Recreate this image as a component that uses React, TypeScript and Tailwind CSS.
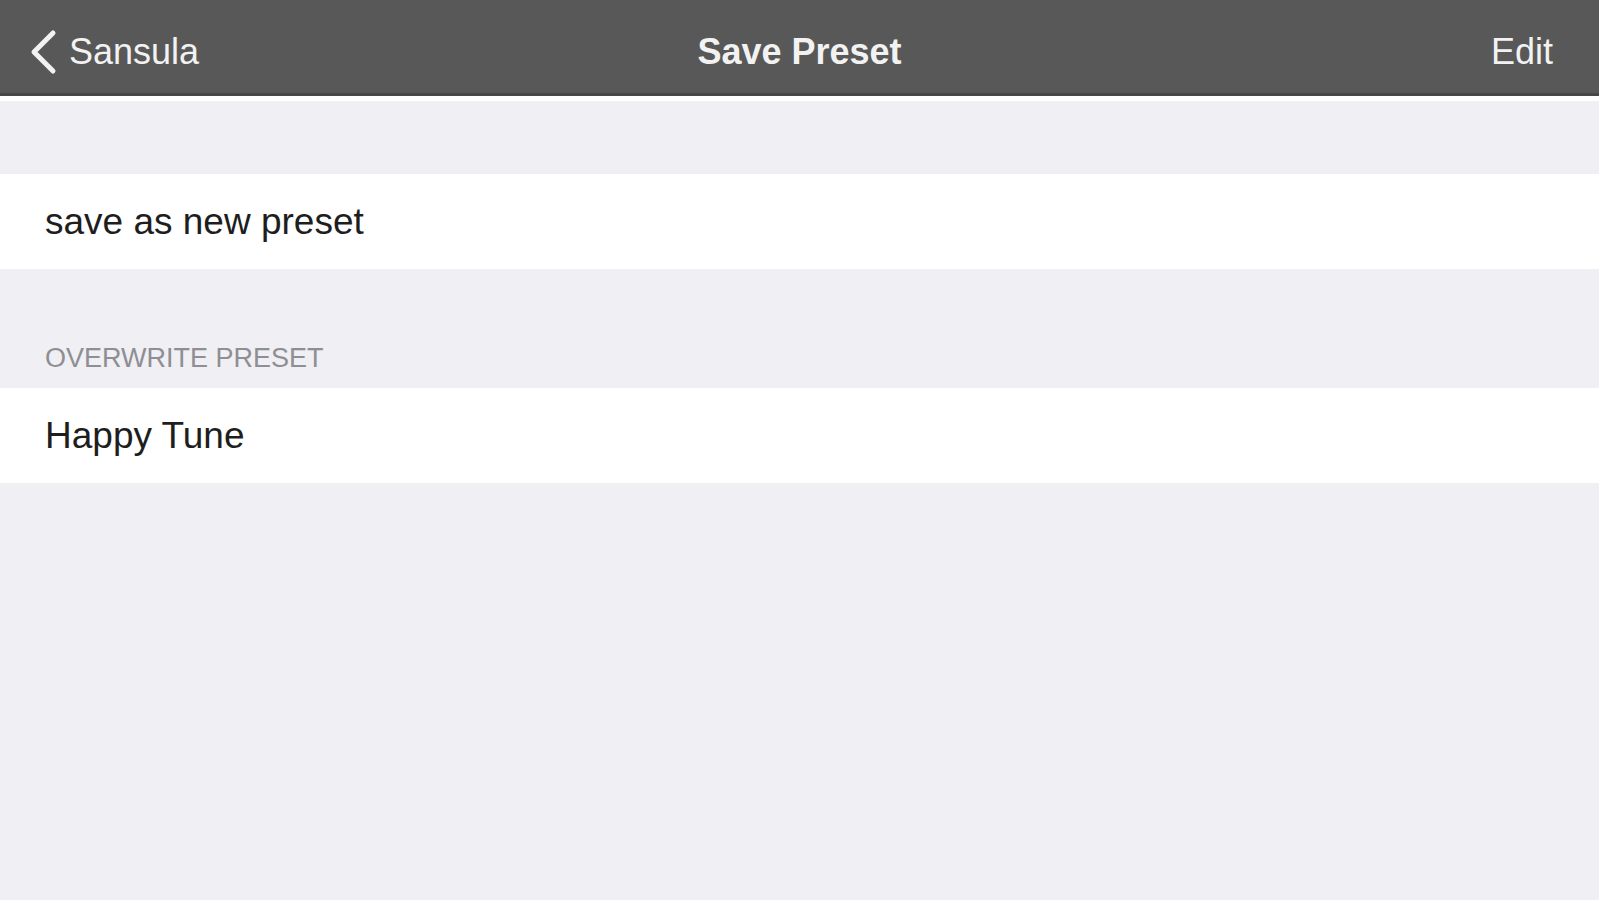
import React from 'react'

const font = { fontFamily: '"Liberation Sans", Arial, sans-serif' }

export default function App() {
  return (
    <div className="min-h-[900px] w-full bg-[#efeff4]" style={font}>
      {/* Nav bar */}
      <div className="relative flex h-[96px] items-center justify-between border-b-[3px] border-[#474747] bg-[#585858] px-[28px] pt-[10px] text-[36px] text-[#f2f2f2]">
        <button className="flex items-center gap-[11px]">
          <svg width="30" height="46" viewBox="0 0 30 46" fill="none">
            <path d="M25 4 L6 23 L25 42" stroke="#f2f2f2" strokeWidth="5" strokeLinecap="round" strokeLinejoin="round" />
          </svg>
          <span>Sansula</span>
        </button>
        <div className="absolute left-1/2 -translate-x-1/2 font-bold">Save Preset</div>
        <button className="pr-[18px]">Edit</button>
      </div>
      <div className="h-[5px] bg-white" />

      {/* spacer */}
      <div className="h-[73px]" />

      <div className="flex h-[95px] items-center bg-white px-[45px] text-[37px] text-[#1e1e1e]">
        save as new preset
      </div>

      <div className="flex h-[119px] items-end px-[45px] pb-[10px] text-[27px] uppercase text-[#8e8e93]">
        Overwrite Preset
      </div>

      <div className="flex h-[95px] items-center bg-white px-[45px] text-[37px] text-[#1e1e1e]">
        Happy Tune
      </div>
    </div>
  )
}
